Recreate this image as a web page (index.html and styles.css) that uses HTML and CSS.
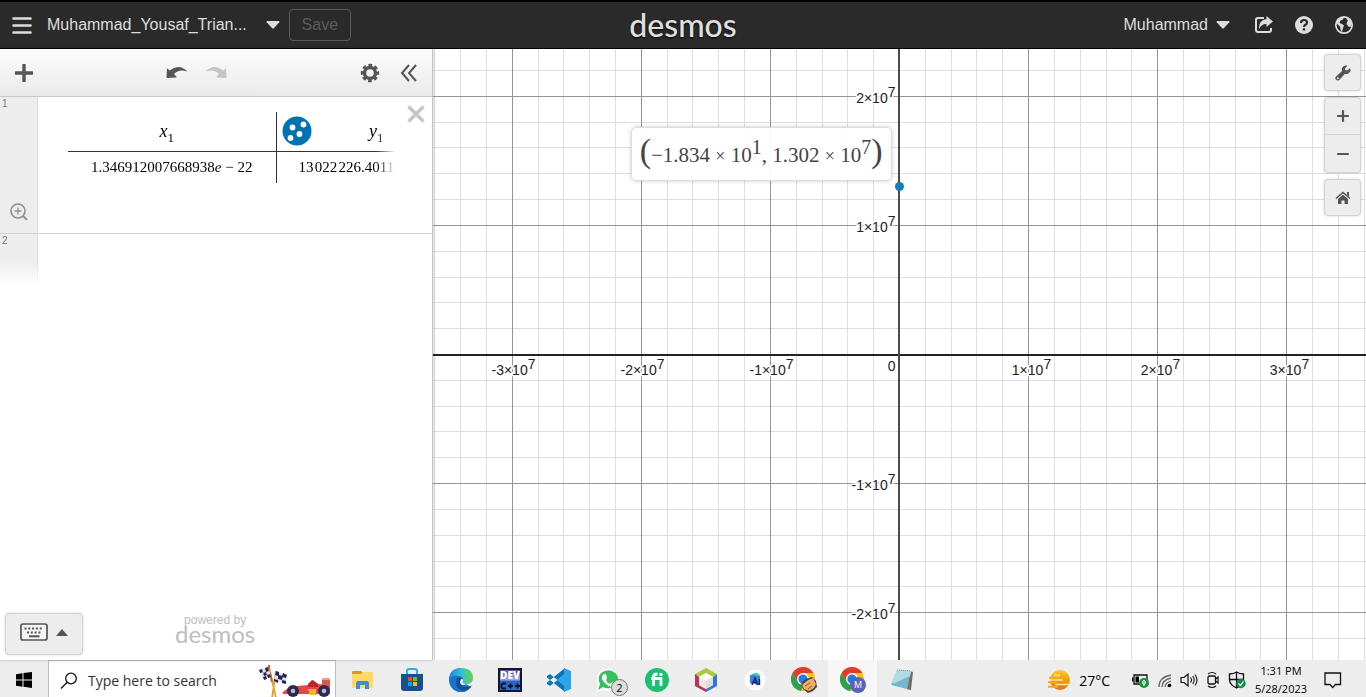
FILE: index.html
```html
<!DOCTYPE html>
<html lang="en">
<head>
<meta charset="utf-8">
<title>Desmos | Graphing Calculator</title>
<link rel="stylesheet" href="styles.css">
</head>
<body>
<header class="header">
  <div class="header-side">
    <button class="icon-btn menu-btn" aria-label="Menu"><svg width="20" height="17" viewBox="0 0 20 17"><path d="M1.500 1.500h17M1.500 8.500h17M1.500 15.500h17" stroke="#ddd" stroke-width="2.600" stroke-linecap="round"/></svg></button>
    <button class="title-btn"><span class="title-text">Muhammad_Yousaf_Trian...</span><svg width="14" height="8" viewBox="0 0 14 8"><path d="M1 0h12q1 .3.300 1.200L8 7q-1 1-2 0L.700 1.200Q0 .3 1 0z" fill="#ddd"/></svg></button>
    <button class="save-btn" disabled>Save</button>
  </div>
  <h1 class="logo">desmos</h1>
  <div class="header-side header-right">
    <button class="user-btn">Muhammad<svg width="14" height="8" viewBox="0 0 14 8"><path d="M1 0h12q1 .3.300 1.200L8 7q-1 1-2 0L.700 1.200Q0 .3 1 0z" fill="#ddd"/></svg></button>
    <button class="icon-btn" aria-label="Share"><svg width="20" height="18" viewBox="0 0 20 18"><path d="M10 2H4Q2 2 2 4v10q0 2 2 2h11q2 0 2-2v-2" fill="none" stroke="#ddd" stroke-width="2"/><path d="M12.500 0l6.500 5.500-6.500 5.500V8Q8 7.500 5 13 4.500 4 12.500 3z" fill="#ddd"/></svg></button>
    <button class="icon-btn" aria-label="Help"><svg width="20" height="20" viewBox="0 0 20 20"><circle cx="10" cy="10" r="9" fill="#ddd"/><path d="M7 8q0-3 3-3t3 2.500Q13 9 11.500 9.800T10 12" fill="none" stroke="#2a2a2a" stroke-width="2.200"/><path d="M8.800 13.300h2.400v2.200H8.800z" fill="#2a2a2a"/></svg></button>
    <button class="icon-btn" aria-label="Language"><svg width="20" height="20" viewBox="0 0 20 20"><circle cx="10" cy="10" r="8.200" fill="none" stroke="#ddd" stroke-width="1.700"/><path d="M3 5l3.500-3L10 2l-1 2.500-2.500 1L5.500 8l2.500 1 2 1.500-1 2.500-1 4.500-1.500-3-.5-3L3 9zM12 3l3 1 2.500 3.500-.5 4-2 .5-2.500-3 .5-2 1-1z" fill="#ddd"/></svg></button>
  </div>
</header>

<main class="main">
  <section class="sidebar" aria-label="Expressions">
    <div class="toolbar">
      <button class="tool" aria-label="Add item"><svg width="18" height="18" viewBox="0 0 18 18"><path d="M9 1v16M1 9h16" stroke="#555" stroke-width="3.400" stroke-linecap="round"/></svg></button>
      <div class="tool-group history">
        <button class="tool" aria-label="Undo"><svg width="22" height="14" viewBox="0 0 22 14"><path d="M1 3q-.5-.5 0-.8l2.600 2.300Q13-3 21.500 5.500 13 2.500 8 8l2.500 2.700q.4.800-.5.800L1.500 12q-1 0-1-1z" fill="#555"/></svg></button>
        <button class="tool" aria-label="Redo" disabled><svg width="22" height="14" viewBox="0 0 22 14"><path d="M21 3q.5-.5 0-.8l-2.600 2.300Q9-3 .500 5.500 9 2.500 14 8l-2.500 2.700q-.4.800.5.800l8.500.5q1 0 1-1z" fill="#c4c4c4"/></svg></button>
      </div>
      <div class="tool-group">
        <button class="tool" aria-label="Edit list"><svg width="20" height="20" viewBox="0 0 20 20"><circle cx="10" cy="10" r="5.500" fill="none" stroke="#555" stroke-width="3.400"/><circle cx="10" cy="10" r="7.800" fill="none" stroke="#555" stroke-width="2.800" stroke-dasharray="3.600 2.526" stroke-dashoffset="1.800"/></svg></button>
        <button class="tool" aria-label="Hide list"><svg width="18" height="18" viewBox="0 0 18 18"><path d="M9 1L2 9l7 8M16 1L9 9l7 8" fill="none" stroke="#555" stroke-width="2"/></svg></button>
      </div>
    </div>
    <article class="expr">
      <div class="gutter"><span>1</span><button class="zoom-fit" aria-label="Zoom fit"><svg width="18" height="18" viewBox="0 0 18 18"><circle cx="8" cy="8" r="7" fill="none" stroke="#909090" stroke-width="1.600"/><path d="M8 4.500v7M4.500 8h7" stroke="#909090" stroke-width="1.300"/><path d="M13 13l4 3.800" stroke="#909090" stroke-width="2"/></svg></button></div>
      <div class="table-wrap">
        <table class="data">
          <thead><tr><th class="x-head"><i>x</i><sub>1</sub></th><th class="y-head"><button class="style-btn" aria-label="Column style"><svg width="30" height="30" viewBox="0 0 30 30"><circle cx="15" cy="15" r="14.500" fill="#0072b1"/><g fill="#fff"><circle cx="10.500" cy="11.500" r="2.900"/><circle cx="21.500" cy="8.500" r="2.900"/><circle cx="17.500" cy="18" r="2.900"/><circle cx="8.500" cy="22" r="2.900"/></g></svg></button><i>y</i><sub>1</sub></th></tr></thead>
          <tbody><tr><td>1.346912007668938<i>e</i> − 22</td><td class="y-value">13&#8202;022&#8202;226.40110</td></tr></tbody>
        </table>
      </div>
      <button class="close" aria-label="Delete"><svg width="18" height="18" viewBox="0 0 18 18"><path d="M1.500 1.500l15 15M16.500 1.500l-15 15" stroke="#c6c6c6" stroke-width="3.400"/></svg></button>
    </article>
    <div class="expr-next"><div class="gutter"><span>2</span></div></div>
    <footer class="side-foot">
      <button class="keypad" aria-label="Show keypad"><svg width="28" height="18" viewBox="0 0 28 18"><rect x="1" y="1" width="26" height="16" rx="2" fill="#f4f4f4" stroke="#555" stroke-width="1.700"/><path d="M4.500 5.500h19M7 9.500h15" stroke="#555" stroke-width="2" stroke-dasharray="2 1.800"/><path d="M9 13.300h10.500" stroke="#555" stroke-width="2"/></svg><svg width="12" height="7" viewBox="0 0 12 7"><path d="M6 0l6 7H0z" fill="#555"/></svg></button>
      <div class="powered">powered by<span>desmos</span></div>
    </footer>
  </section>

  <section class="graph" aria-label="Graph paper">
    <svg class="paper" id="paper">
      <g id="grid"></g>
      <svg class="origin" x="50%" y="50%">
        <g class="labels" text-anchor="middle">
          <text x="-386" y="20">-3×10<tspan dy="-6">7</tspan></text>
          <text x="-257" y="20">-2×10<tspan dy="-6">7</tspan></text>
          <text x="-128" y="20">-1×10<tspan dy="-6">7</tspan></text>
          <text x="132" y="20">1×10<tspan dy="-6">7</tspan></text>
          <text x="261" y="20">2×10<tspan dy="-6">7</tspan></text>
          <text x="390" y="20">3×10<tspan dy="-6">7</tspan></text>
        </g>
        <g class="labels" text-anchor="end">
          <text x="-4" y="-252">2×10<tspan dy="-6">7</tspan></text>
          <text x="-4" y="-123">1×10<tspan dy="-6">7</tspan></text>
          <text x="-4" y="135">-1×10<tspan dy="-6">7</tspan></text>
          <text x="-4" y="264">-2×10<tspan dy="-6">7</tspan></text>
          <text x="-4" y="16">0</text>
        </g>
        <circle cx="0" cy="-168" r="4.500" fill="#147dbb"/>
      </svg>
    </svg>
    <div class="anchor"><div class="tip"><span class="paren">(</span><span class="point">−1.834 <small>×</small> 10<sup>1</sup>, 1.302 <small>×</small> 10<sup>7</sup></span><span class="paren">)</span></div></div>
    <div class="controls">
      <button class="ctl" aria-label="Graph settings"><svg width="16" height="16" viewBox="0 0 16 16"><path d="M14.900 3.200L12 5.600l-1.700-.4-.4-1.700L12.600.8Q8.500-.5 7 3q-.4 1.500 0 3L.8 11.800q-1.200 1.700.2 3t3.200.2L9.800 9Q14 9.700 15.500 6q.4-1.500-.6-2.800zM2.800 12.200a1 1 0 110 2 1 1 0 010-2z" fill="#555" fill-rule="evenodd"/></svg></button>
      <div class="zoom-pair">
        <button class="ctl" aria-label="Zoom in"><svg width="14" height="14" viewBox="0 0 14 14"><path d="M7 2v10M2 7h10" stroke="#555" stroke-width="2.200" stroke-linecap="round"/></svg></button>
        <button class="ctl" aria-label="Zoom out"><svg width="14" height="14" viewBox="0 0 14 14"><path d="M2 7h10" stroke="#555" stroke-width="2.200" stroke-linecap="round"/></svg></button>
      </div>
      <button class="ctl" aria-label="Default viewport"><svg width="16" height="14" viewBox="0 0 16 14"><path d="M1 7.500L8 1.500l7 6" fill="none" stroke="#555" stroke-width="1.500"/><path d="M12 1h2v4.500l-2-1.800zM8 3.800l5 4.200v5H9.500V9.500h-3V13H3V8z" fill="#555"/></svg></button>
    </div>
  </section>
</main>

<nav class="taskbar" aria-label="Taskbar">
  <button class="start" aria-label="Start"><svg width="16" height="16" viewBox="0 0 16 16"><path d="M0 2.300L6.500 1.300v6.200H0zM7.500 1.100L16 0v7.500H7.500zM0 8.500h6.500v6.200L0 13.800zM7.500 8.500H16V16l-8.500-1.200z"/></svg></button>
  <label class="search"><svg width="18" height="18" viewBox="0 0 18 18"><circle cx="11" cy="6.500" r="5.300" fill="none" stroke="#111" stroke-width="1.300"/><path d="M7.200 10.300L1 16.500" stroke="#111" stroke-width="1.400"/></svg><input type="text" placeholder="Type here to search" aria-label="Type here to search">
    <svg class="race" width="74" height="34" viewBox="0 0 74 34"><path d="M18 34L11 3M14 34l4-27" stroke="#e2a11d" stroke-width="1.700"/><path d="M11 1v4M12 9l2 9" stroke="#e5532d" stroke-width="2"/><g fill="#dfe1f0"><path d="M1 6l9-3 3 10-8 2z"/><path d="M18 7l11 4-1 9-12-4z"/></g><path d="M1 6l3-1 1 4 3-1 1 3 3-1 1 3-3 1-1-3-3 1-1-4-3 1zM7 4l3-1 1 4-3 1zM5 13l3-1 1 3-3 1zM18 7l3 1v3l4 1-1 4-4-1v-3l-3-1zM25 9l4 2-1 3-4-1zM24 16l4 1v3l-4-1zM16 15l4 1v3l-4-2z" fill="#28264f"/><path d="M24 29q5-6 15-7l12-1 4-5 5 4 12 1v9H26z" fill="#e6454a"/><path d="M50 20l4-4 6 4v3H50z" fill="#bb252c"/><path d="M64 14h8v8h-8z" fill="#d85a4b"/><path d="M64 14h8v2h-8z" fill="#eaa097"/><path d="M50 25h8v6h-6z" fill="#f4b534"/><g fill="#30284f"><circle cx="35" cy="27" r="6"/><circle cx="66" cy="27" r="6"/></g><g fill="#b7b6d6"><circle cx="35" cy="27" r="2.300"/><circle cx="66" cy="27" r="2.300"/></g></svg>
  </label>
  <div class="apps">
    <button class="app" aria-label="File Explorer"><svg width="24" height="24" viewBox="0 0 24 24"><path d="M1 4q0-1 1-1h8l2 2v3H1z" fill="#d99a16"/><path d="M1 6h9l2-2h9q1 0 1 1v15H1z" fill="#ffd867"/><path d="M5 21v-6q0-2 2-2h9q2 0 2 2v6h-4v-4H9v4z" fill="#3f8ed0"/></svg></button>
    <button class="app" aria-label="Store"><svg width="24" height="24" viewBox="0 0 24 24"><path d="M7 7V3q0-2 2-2h6q2 0 2 2v4" fill="none" stroke="#23b1e6" stroke-width="2"/><path d="M1 6h22v14q0 3-3 3H4q-3 0-3-3z" fill="#174f8f"/><path d="M8 9h4v4H8z" fill="#f25022"/><path d="M13 9h4v4h-4z" fill="#7fba00"/><path d="M8 14h4v4H8z" fill="#00a4ef"/><path d="M13 14h4v4h-4z" fill="#ffb900"/></svg></button>
    <button class="app" aria-label="Edge"><svg width="24" height="24" viewBox="0 0 24 24"><defs><linearGradient id="eg"><stop stop-color="#1c87dc"/><stop offset=".5" stop-color="#31bfd3"/><stop offset="1" stop-color="#66d54b"/></linearGradient></defs><path d="M0 12A12 12 0 0112 0q7 1 6 12l-3 3 7 4A12 12 0 010 12z" fill="#1674c9"/><path d="M0 11Q1 0 12 0q12 0 12 10 0 6-7 6-5 0-3-3 1-5-5-5Q3 7 0 11z" fill="url(#eg)"/><path d="M8 10q-3 9 4 12.500 7 1 11-5-6 3-10 0-3-2-1-6 0-3-4-1.500z" fill="#174b98"/><path d="M12 11q3 0 2 2-1 3 3 3.500-5 2-6-2.500z" fill="#ededed"/></svg></button>
    <button class="app" aria-label="Dev-C++"><svg class="devcpp" width="24" height="24" viewBox="0 0 24 24"><defs><linearGradient id="dv" x2="0" y2="1"><stop stop-color="#514a9c"/><stop offset=".5" stop-color="#a1a7dc"/><stop offset=".55" stop-color="#2a62bd"/><stop offset="1" stop-color="#2f70cf"/></linearGradient></defs><rect x="1" y="1" width="22" height="22" fill="url(#dv)" stroke="#16152a" stroke-width="2"/><text x="12" y="11" fill="#fff">DEV</text><path d="M8 15.500H5l-1.500 1v3l1.500 1h3M10 18h5M12.500 15.500v5M17 18h5M19.500 15.500v5" fill="none" stroke="#071334" stroke-width="1.800"/></svg></button>
    <button class="app" aria-label="Visual Studio Code"><svg width="24" height="24" viewBox="0 0 24 24"><path d="M0 8l3-2 15 12v6L0 9.500zM0 16l3 2L18 6V0L0 14.500z" fill="#0877b9"/><path d="M17 0l7 3v18l-7 3V7l-7 5 7 5z" fill="#2aa5eb"/></svg></button>
    <button class="app" aria-label="WhatsApp"><svg width="24" height="24" viewBox="0 0 24 24"><path d="M0 24l2-7Q-1 10 3 5q5-6 12-4 8 2 9 10 0 7-6 10-6 3-11 1z" fill="#fff"/><path d="M2 22l2-6Q1 10 5 5q5-4 11-2 7 3 6 10-2 6-8 7-4 1-7-1z" fill="#36c15b"/><path d="M8 6l2 0 1 4-1 2q1 3 4 4l2-2 3 2q0 3-3 3-3 0-7-4T6 9q0-2 2-3z" fill="#fff"/></svg><span class="badge">2</span></button>
    <button class="app" aria-label="Fiverr"><svg width="24" height="24" viewBox="0 0 24 24"><circle cx="12" cy="12" r="12" fill="#1dbf73"/><path d="M8.500 18v-9q0-3 4-3M6 10.500h10V18" fill="none" stroke="#fff" stroke-width="2.800"/><circle cx="16" cy="6.500" r="1.700" fill="#fff"/></svg></button>
    <button class="app" aria-label="NetBeans"><svg width="24" height="24" viewBox="0 0 24 24"><path d="M12 0l11 6-4 3-7-4-7 4-4-3z" fill="#adc83b"/><path d="M1 6l4 3v8l7 4v3L1 18z" fill="#ba315b"/><path d="M23 6l-4 3v8l-7 4v3l11-6z" fill="#337bd2"/><path d="M5 9l7-4 7 4-7 4z" fill="#fff"/><path d="M5 9l7 4v8l-7-4z" fill="#ecebd8"/><path d="M19 9l-7 4v8l7-4z" fill="#ddd"/></svg></button>
    <button class="app" aria-label="Android Studio"><svg width="24" height="24" viewBox="0 0 24 24"><circle cx="12" cy="12" r="10.500" fill="#fff"/><path d="M8 8q1-3 5-3 3 0 4 3z" fill="#35d485"/><path d="M7 7h4l1 1h5v9h-4l-2-2-2 1-2-1z" fill="#397ee9"/><path d="M9 17l3-7 3 7M10.500 14.500h3M16.500 11v6" fill="none" stroke="#102a55" stroke-width="1.400"/></svg></button>
    <button class="app" aria-label="Chrome"><svg width="26" height="26" viewBox="0 0 26 26"><use href="#chrome"/><path d="M10 17l5-5 6-2 4 4 1 6-4 4-5 2-5-4z" fill="#4e3a2b"/><path d="M11 18l6-5 5-2 3 6-2 4-5 3-5-2z" fill="#edae68"/><path d="M14 19l5-3M17 22l4-3" stroke="#8e5d35"/></svg></button>
    <button class="app active" aria-label="Chrome, profile M"><svg width="26" height="26" viewBox="0 0 26 26"><g id="chrome"><circle cx="12" cy="12" r="12" fill="#fbc116"/><path d="M1.600 6A12 12 0 0122.400 6H12L7 15z" fill="#e33b2e"/><path d="M1.600 6L7 15l5 3-2 6A12 12 0 011.600 6z" fill="#2ba24c"/><circle cx="12" cy="12" r="6" fill="#fff"/><circle cx="12" cy="12" r="4.600" fill="#2878e6"/></g><circle cx="18" cy="18" r="8" fill="#5963b8"/><text class="profile" x="18" y="21">M</text></svg></button>
    <button class="app" aria-label="Notepad"><svg width="24" height="24" viewBox="0 0 24 24"><path d="M20 3l3 1-2 18-5-1z" fill="#786c5c"/><path d="M7 2l14 1-4 19L1 17z" fill="#73b7cc"/><path d="M7 2l14 1-1 5L5 15l-3 0z" fill="#b0dce6"/><path d="M1 17l16 4v1L0 19z" fill="#e9f1f2"/><path d="M7 2l14 1" stroke="#758f96" stroke-dasharray="1 1"/></svg></button>
  </div>
  <div class="tray">
    <button class="weather"><svg width="24" height="22" viewBox="0 0 24 22"><defs><linearGradient id="sun" x2="0" y2="1"><stop stop-color="#f5ce17"/><stop offset="1" stop-color="#ef6b18"/></linearGradient></defs><circle cx="13" cy="11" r="10" fill="url(#sun)"/><path d="M3 11h13M8 15.500h14M7 6.500h6" stroke="#ffe19b" stroke-width="1.300"/><path d="M2 8.800h9M1 13.300h9M1 17.700h10" stroke="#f5a820" stroke-width="2"/></svg>27°C</button>
    <div class="status">
      <svg width="18" height="18" viewBox="0 0 18 18"><path d="M2 4h13v9H2zM.500 6.500v4" fill="none" stroke="#111" stroke-width="1.300"/><path d="M3.500 5.500H7v6H3.500z"/><circle cx="12" cy="12" r="5" fill="#16913b"/><path d="M12 9q3.500 3 0 4.500-3.500-1.500 0-4.500v6" fill="none" stroke="#fff"/></svg>
      <svg width="16" height="18" viewBox="0 0 16 18"><g fill="none" stroke="#666" stroke-width="1.300"><path d="M2 16Q2 6 14 4M5 16q0-7 9-9M8 16q0-4 6-6M11 16q0-2 3-3"/></g><circle cx="12.500" cy="14.500" r="1.800"/></svg>
      <svg width="18" height="18" viewBox="0 0 18 18"><path d="M1 6.500h3L8 3v12l-4-3.500H1z" fill="none" stroke="#111" stroke-width="1.200"/><path d="M10.500 6.500q2 2.500 0 5M12.700 5q3 4 0 8M15 3.500q4 5.500 0 11" fill="none" stroke="#222" stroke-width="1.200"/></svg>
      <svg width="16" height="18" viewBox="0 0 16 18"><rect x="3" y="5" width="7.500" height="8" rx="1.500" fill="none" stroke="#111" stroke-width="1.300"/><path d="M10.500 8L13 6v6l-2.500-2M3 3q4-3 8 0M3 15q4 3 8 0" fill="none" stroke="#111" stroke-width="1.200"/></svg>
      <svg width="18" height="18" viewBox="0 0 18 18"><path d="M8.500 1q3 2 7 2v6q-1 5-7 8Q2 14 1.500 9V3q4 0 7-2zM8.500 1v16M1.500 8.500h14" fill="none" stroke="#111" stroke-width="1.300"/><circle cx="13" cy="12.500" r="4.700" fill="#168b48"/><path d="M10.500 12.500l2 2 3-4" fill="none" stroke="#fff" stroke-width="1.200"/></svg>
    </div>
    <time class="clock">1:31 PM<br>5/28/2023</time>
    <button class="notify" aria-label="Notifications"><svg width="18" height="18" viewBox="0 0 18 18"><path d="M1 2h15.500v11.500h-5L8.700 16.500l-2.700-3H1z" fill="none" stroke="#111" stroke-width="1.300"/></svg></button>
  </div>
</nav>
<script src="graph.js"></script>
</body>
</html>
```

FILE: styles.css
```css
* { box-sizing: border-box; }
body { margin: 0; height: 100vh; display: flex; flex-direction: column; overflow: hidden; background: #fff; color: #000; font-family: "Liberation Sans", Arial, sans-serif; }
button { margin: 0; padding: 0; border: 0; background: none; font: inherit; color: inherit; display: flex; align-items: center; justify-content: center; }
svg { display: block; flex: none; }

.header { flex: none; display: flex; align-items: center; height: 49px; padding: 0 12px; background: #2a2a2a; border-top: 2px solid #000; border-bottom: 1px solid #000; color: #ddd; font-size: 16px; }
.header-side { flex: 1; display: flex; align-items: center; }
.header-right { justify-content: flex-end; gap: 20px; }
.menu-btn { margin-right: 15px; }
.title-btn { gap: 19px; margin-right: 9px; }
.title-text { white-space: nowrap; }
.save-btn { width: 62px; height: 32px; border: 1px solid #595959; border-radius: 4px; color: #5c5c5c; }
.logo { margin: 0; font: 500 32px/40px Lato, sans-serif; color: #e0e0e0; text-shadow: 0 1px 2px #000; }
.user-btn { gap: 8px; margin-right: 4px; }

.main { flex: 1; min-height: 0; display: flex; }
.sidebar { flex: none; width: 433px; display: flex; flex-direction: column; border-right: 1px solid #c4c4c4; box-shadow: 0 0 3px rgba(0, 0, 0, .25); z-index: 1; background: #fff; }
.toolbar { flex: none; height: 48px; display: flex; align-items: center; justify-content: space-between; padding: 0 14px 0 15px; background: linear-gradient(#fcfcfc, #eaeaea); border-bottom: 1px solid #c8c8c8; }
.tool-group { display: flex; align-items: center; gap: 20px; }
.history { gap: 17px; }
.expr { display: flex; height: 137px; border-bottom: 1px solid #d2d2d2; }
.gutter { flex: none; width: 38px; display: flex; flex-direction: column; justify-content: space-between; background: #ededed; border-right: 1px solid #ddd; font-size: 10px; line-height: 14px; color: #777; }
.gutter span { padding-left: 2px; }
.zoom-fit { padding: 0 0 12px; }
.table-wrap { flex: 1; margin: 15px 0 0 30px; overflow: hidden; mask-image: linear-gradient(to right, #000 94%, transparent 100%); }
.data { width: 408px; table-layout: fixed; border-collapse: collapse; font-family: "Liberation Serif", serif; font-size: 15px; text-align: center; white-space: nowrap; }
.data th { height: 39px; padding: 0; border-bottom: 1px solid #333; font-size: 18px; font-weight: 400; }
.data sub { font-size: 13px; line-height: 0; }
.data td { height: 32px; padding: 0; }
.data tbody { vertical-align: middle; }
.data th:first-child, .data td:first-child { width: 208px; border-right: 1px solid #333; }
.data .x-head { padding-right: 10px; }
.y-head { position: relative; }
.style-btn { position: absolute; left: 5px; top: 4px; }
.data .y-value { padding-left: 22px; text-align: left; }
.close { align-self: flex-start; padding: 8px 7px 0 11px; }
.expr-next { flex: none; height: 52px; display: flex; mask-image: linear-gradient(#000 50%, transparent); }
.side-foot { margin-top: auto; display: flex; align-items: flex-start; padding: 0 0 5px 5px; }
.keypad { width: 78px; height: 42px; gap: 8px; padding-bottom: 4px; background: #ededed; border: 1px solid #d2d2d2; border-radius: 4px; box-shadow: 0 0 3px rgba(0, 0, 0, .15); }
.powered { display: flex; flex-direction: column; align-items: center; margin-left: 92px; font-size: 12px; line-height: 14px; color: #bdbdbd; }
.powered span { font: 24px/14px Lato, sans-serif; }

.graph { flex: 1; position: relative; overflow: hidden; }
.paper { width: 100%; height: 100%; }
.origin { overflow: visible; }
.minor { stroke: #dedede; }
.major { stroke: #959595; }
.axis { stroke: #222; stroke-width: 2px; }
.axis-y { stroke: #4a4a4a; }
.labels { font-size: 14px; fill: #222; stroke: #fff; stroke-width: 3px; paint-order: stroke; stroke-linejoin: round; }
.anchor { position: absolute; left: 50%; top: 50%; }
.tip { position: absolute; right: 8px; bottom: 174px; height: 54px; padding: 0 8px; display: flex; align-items: center; white-space: nowrap; background: rgba(255, 255, 255, .94); border: 1px solid #ddd; border-radius: 5px; box-shadow: 0 0 4px rgba(0, 0, 0, .2); font-family: "Liberation Serif", serif; font-size: 21px; line-height: 24px; color: #444; }
.point { padding-top: 4px; }
.tip small { font-size: 18px; }
.tip sup { font-size: 20px; line-height: 0; vertical-align: 8px; }
.paren { padding-bottom: 6px; font-size: 34px; }
.controls { position: absolute; right: 5px; top: 5px; display: flex; flex-direction: column; gap: 6px; }
.ctl { width: 37px; height: 37px; background: #ededed; border: 1px solid #d2d2d2; border-radius: 4px; box-shadow: 0 0 3px rgba(0, 0, 0, .15); }
.zoom-pair .ctl { height: 38px; box-shadow: none; }
.zoom-pair { border-radius: 4px; box-shadow: 0 0 3px rgba(0, 0, 0, .15); }
.zoom-pair .ctl:first-child { border-radius: 4px 4px 0 0; }
.zoom-pair .ctl:last-child { border-top: 0; border-radius: 0 0 4px 4px; }

.taskbar { flex: none; height: 37px; display: flex; background: #ededed; font-family: "Open Sans", "Noto Sans", sans-serif; }
.taskbar > *, .app { padding-top: 3px; }
.start { width: 48px; }
.search { flex: none; width: 288px; display: flex; align-items: center; padding-left: 11px; background: #fff; border: 1px solid #bebebe; border-bottom: 0; }
.search input { flex: 1; min-width: 0; margin-left: 10px; padding: 0; border: 0; outline: 0; background: none; font: 14px/20px "Open Sans", sans-serif; color: #333; }
.search input::placeholder { color: #333; opacity: 1; }
.race { margin-right: 3px; }
.apps { display: flex; margin-left: 2px; }
.taskbar > .apps { padding-top: 0; }
.app { position: relative; width: 49px; }
.active { background: #f7f7f7; }
.badge { position: absolute; right: 4px; bottom: 1px; width: 17px; height: 17px; border: 1px solid #777; border-radius: 50%; background: #dcdcdc; font-size: 11px; line-height: 15px; text-align: center; }
.devcpp { font: 800 10px "Open Sans", sans-serif; text-anchor: middle; }
.profile { font: 9px "Open Sans", sans-serif; fill: #fff; text-anchor: middle; }
.tray { flex: 1; display: flex; align-items: center; justify-content: flex-end; padding-right: 24px; }
.weather { gap: 8px; font-size: 14px; margin-right: 22px; }
.status { display: flex; align-items: center; gap: 7px; margin-right: 8px; }
.clock { width: 54px; font-size: 11px; line-height: 18px; text-align: center; white-space: nowrap; }
.notify { margin-left: 16px; }
```

FILE: graph.js
```js
const UNIT = 129.1;
const grid = document.getElementById('grid');

function addLine(x1, y1, x2, y2, kind) {
  const line = document.createElementNS('http://www.w3.org/2000/svg', 'line');
  Object.entries({ x1, y1, x2, y2, class: kind }).forEach(([k, v]) => line.setAttribute(k, v));
  grid.appendChild(line);
}

function drawGrid() {
  const { width, height } = document.getElementById('paper').getBoundingClientRect();
  grid.replaceChildren();
  const reach = Math.ceil(Math.max(width, height) / UNIT * 5);
  for (const kind of ['minor', 'major', 'axis']) {
    for (let i = -reach; i <= reach; i++) {
      const own = i === 0 ? 'axis' : i % 5 === 0 ? 'major' : 'minor';
      if (own !== kind) continue;
      const x = i === 0 ? Math.floor(width / 2) : Math.floor(width / 2 + i * UNIT / 5) + 0.5;
      const y = i === 0 ? Math.ceil(height / 2) : Math.floor(height / 2 + i * UNIT / 5) + 0.5;
      addLine(0, y, width, y, kind);
      addLine(x, 0, x, height, i === 0 ? 'axis axis-y' : kind);
    }
  }
}

drawGrid();
window.addEventListener('resize', drawGrid);
```
